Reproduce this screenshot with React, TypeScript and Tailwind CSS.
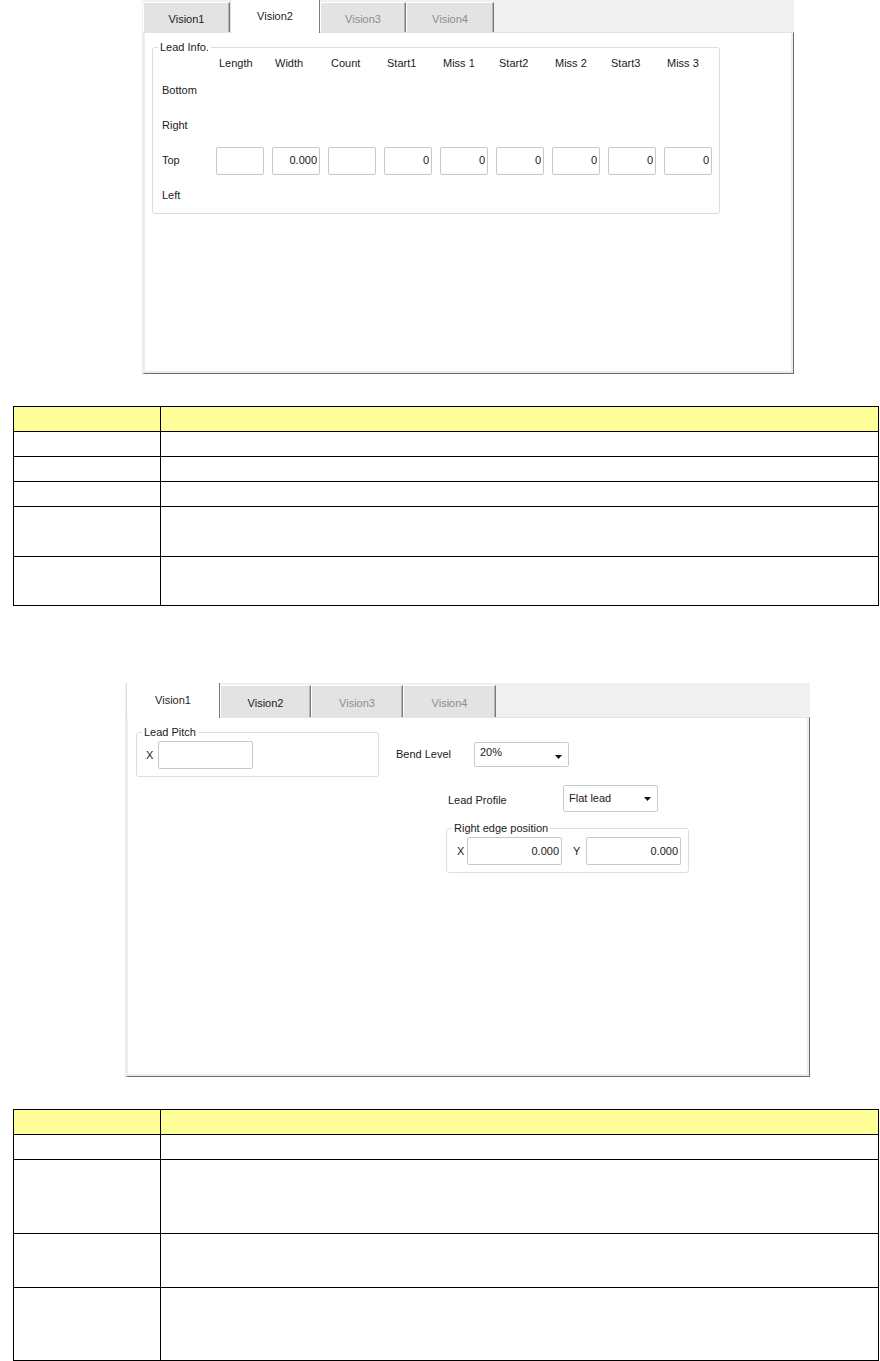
import React from "react";

const font = "font-['Liberation_Sans',Arial,sans-serif] text-[11px] text-[#1b1b1b]";

interface TabProps {
  label: string;
  width: number;
  active?: boolean;
  disabled?: boolean;
  tall?: boolean;
}

// one tab of the old win32 tab control
function Tab({ label, width, active, disabled, tall }: TabProps) {
  const base = "flex shrink-0 justify-center items-center border-r border-r-[#7a7a7a]";
  if (active) {
    return (
      <div
        style={{ width }}
        className={`${base} relative z-10 -mb-px bg-white border-l border-l-[#dcdcdc] ${tall ? "h-[35px]" : "h-[33px]"}`}
      >
        {label}
      </div>
    );
  }
  return (
    <div
      style={{ width }}
      className={`${base} border-t border-l border-t-white border-l-white bg-[#e3e3e3] pt-[3px] shadow-[inset_-1px_0_0_#b4b4b4] ${tall ? "h-[32px]" : "h-[30px]"} ${disabled ? "text-[#8d8d8d]" : ""}`}
    >
      {label}
    </div>
  );
}

function Field({ value = "", className = "" }: { value?: string; className?: string }) {
  return (
    <div
      className={`flex h-[28px] items-center justify-end rounded-[2px] border border-[#c8c8c8] bg-white pr-[2px] ${className}`}
    >
      {value}
    </div>
  );
}

function Combo({ value, className = "", raised }: { value: string; className?: string; raised?: boolean }) {
  return (
    <div
      className={`flex justify-between rounded-[2px] border border-[#cacaca] bg-white pl-[5px] pr-[6px] ${raised ? "items-start pt-[1px]" : "items-center"} ${className}`}
    >
      <span>{value}</span>
      <svg width="7" height="4" viewBox="0 0 7 4" className={raised ? "mt-[11px]" : ""}>
        <path d="M0 0h7L3.5 4z" fill="#111" />
      </svg>
    </div>
  );
}

function Group({ title, className = "", children }: { title: string; className?: string; children: React.ReactNode }) {
  return (
    <div className={`relative rounded-[3px] border border-[#d5dfe5] ${className}`}>
      <span className="absolute -top-[7px] left-[5px] bg-white px-[2px] leading-[13px]">{title}</span>
      {children}
    </div>
  );
}

function DocTable({ rows }: { rows: number[] }) {
  return (
    <table className="ml-[13px] w-[866px] table-fixed border-collapse">
      <colgroup>
        <col className="w-[147px]" />
        <col />
      </colgroup>
      <tbody>
        {rows.map((h, i) => (
          <tr key={i} style={{ height: h }} className={i === 0 ? "bg-[#ffff99]" : ""}>
            <td className="border border-black p-0"></td>
            <td className="border border-black p-0"></td>
          </tr>
        ))}
      </tbody>
    </table>
  );
}

const headers = ["Length", "Width", "Count", "Start1", "Miss 1", "Start2", "Miss 2", "Start3", "Miss 3"];
const topValues = ["", "0.000", "", "0", "0", "0", "0", "0", "0"];

function VisionTwoPanel() {
  return (
    <div className="ml-[142px] w-[652px]">
      <div className="flex h-[32px] items-end bg-[#f0f0f0] pl-px">
        <Tab label="Vision1" width={87} />
        <Tab label="Vision2" width={90} active />
        <Tab label="Vision3" width={86} disabled />
        <Tab label="Vision4" width={88} disabled />
      </div>
      <div className="h-[342px] border-t border-r border-b border-l-[3px] border-t-[#e3e3e3] border-r-[#6d6d6d] border-b-[#6d6d6d] border-l-[#ededed] bg-white pt-[14px] pl-[7px] shadow-[inset_-2px_-2px_0_#ececec]">
        <Group title="Lead Info." className="w-[568px] pl-[9px] pt-[5px]">
          <div className="grid grid-cols-[46px_repeat(9,48px)] grid-rows-[20px_repeat(4,35px)] gap-x-2 items-center">
            <div />
            {headers.map((h) => (
              <div key={h} className="pl-[3px]">
                {h}
              </div>
            ))}
            {["Bottom", "Right", "Top", "Left"].map((row) => (
              <React.Fragment key={row}>
                <div>{row}</div>
                {row === "Top"
                  ? topValues.map((v, i) => <Field key={i} value={v} />)
                  : headers.map((h) => <div key={h} />)}
              </React.Fragment>
            ))}
          </div>
        </Group>
      </div>
    </div>
  );
}

function VisionOnePanel() {
  return (
    <div className="ml-[125px] w-[685px]">
      <div className="flex h-[34px] items-end bg-[#f0f0f0] pl-px">
        <Tab label="Vision1" width={94} active tall />
        <Tab label="Vision2" width={91} tall />
        <Tab label="Vision3" width={92} disabled tall />
        <Tab label="Vision4" width={93} disabled tall />
      </div>
      <div className="h-[360px] border-t border-r border-b border-l-[3px] border-t-[#e3e3e3] border-r-[#6d6d6d] border-b-[#6d6d6d] border-l-[#ededed] bg-white pt-[14px] shadow-[inset_-2px_-2px_0_#ececec]">
        <div className="ml-[8px] flex items-start">
          <Group title="Lead Pitch" className="flex h-[45px] w-[243px] items-start pl-[9px] pt-[8px]">
            <span className="w-[12px] leading-[28px]">X</span>
            <Field className="w-[95px]" />
          </Group>
          <div className="ml-[17px] mt-[10px] flex h-[25px] items-center">
            <span className="w-[78px]">Bend Level</span>
            <Combo value="20%" raised className="h-[25px] w-[95px]" />
          </div>
        </div>
        <div className="ml-[320px] mt-[8px] flex items-center">
          <span className="w-[115px] pt-[3px]">Lead Profile</span>
          <Combo value="Flat lead" className="h-[27px] w-[95px]" />
        </div>
        <Group title="Right edge position" className="ml-[318px] mt-[16px] flex h-[45px] w-[243px] items-start pl-[10px] pt-[8px]">
          <span className="w-[10px] leading-[28px]">X</span>
          <Field value="0.000" className="w-[95px]" />
          <span className="ml-[11px] w-[13px] leading-[28px]">Y</span>
          <Field value="0.000" className="w-[95px]" />
        </Group>
      </div>
    </div>
  );
}

export default function App() {
  return (
    <div className={`min-h-[1361px] w-[880px] bg-white ${font}`}>
      <VisionTwoPanel />
      <div className="mt-[32px]">
        <DocTable rows={[25, 25, 25, 25, 50, 49]} />
      </div>
      <div className="mt-[77px]">
        <VisionOnePanel />
      </div>
      <div className="mt-[32px]">
        <DocTable rows={[25, 25, 74, 54, 73]} />
      </div>
    </div>
  );
}
